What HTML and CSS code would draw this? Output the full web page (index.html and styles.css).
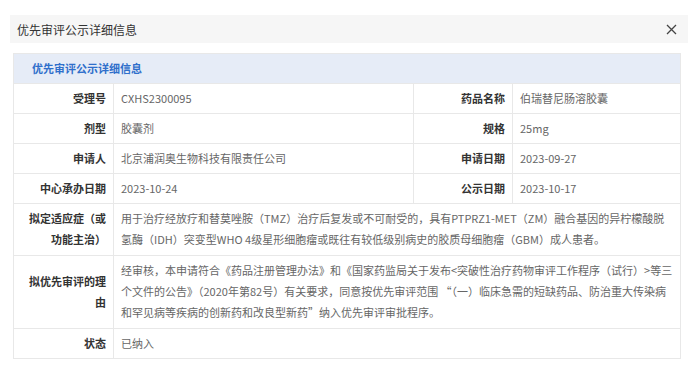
FILE: index.html
```html
<!DOCTYPE html>
<html lang="zh-CN">
<head>
<meta charset="utf-8">
<title>优先审评公示详细信息</title>
<link rel="stylesheet" href="styles.css">
</head>
<body>
<div class="dialog-header">
  <span class="dialog-title">优先审评公示详细信息</span>
  <svg class="close-icon" width="11" height="11" viewBox="0 0 11 11"><path d="M1 1L10 10M10 1L1 10" stroke="#444" stroke-width="1.3" fill="none"/></svg>
</div>
<div class="dialog-body">
  <table class="info-table">
    <colgroup>
      <col class="c-label1">
      <col class="c-value1">
      <col class="c-label2">
      <col class="c-value2">
    </colgroup>
    <tr><th class="table-title" colspan="4">优先审评公示详细信息</th></tr>
    <tr>
      <td class="label">受理号</td><td class="value">CXHS2300095</td>
      <td class="label">药品名称</td><td class="value">伯瑞替尼肠溶胶囊</td>
    </tr>
    <tr>
      <td class="label">剂型</td><td class="value">胶囊剂</td>
      <td class="label">规格</td><td class="value">25mg</td>
    </tr>
    <tr>
      <td class="label">申请人</td><td class="value">北京浦润奥生物科技有限责任公司</td>
      <td class="label">申请日期</td><td class="value">2023-09-27</td>
    </tr>
    <tr>
      <td class="label">中心承办日期</td><td class="value">2023-10-24</td>
      <td class="label">公示日期</td><td class="value">2023-10-17</td>
    </tr>
    <tr class="multi">
      <td class="label">拟定适应症（或功能主治）</td>
      <td class="value" colspan="3">用于治疗经放疗和替莫唑胺（TMZ）治疗后复发或不可耐受的，具有PTPRZ1-MET（ZM）融合基因的异柠檬酸脱氢酶（IDH）突变型WHO 4级星形细胞瘤或既往有较低级别病史的胶质母细胞瘤（GBM）成人患者。</td>
    </tr>
    <tr class="multi">
      <td class="label">拟优先审评的理由</td>
      <td class="value" colspan="3">经审核，本申请符合《药品注册管理办法》和《国家药监局关于发布&lt;突破性治疗药物审评工作程序（试行）&gt;等三个文件的公告》（2020年第82号）有关要求，同意按优先审评范围 “（一）临床急需的短缺药品、防治重大传染病和罕见病等疾病的创新药和改良型新药”纳入优先审评审批程序。</td>
    </tr>
    <tr>
      <td class="label">状态</td><td class="value" colspan="3">已纳入</td>
    </tr>
  </table>
</div>
</body>
</html>
```
FILE: styles.css
```css
html, body {
  margin: 0;
  padding: 0;
  background: #ffffff;
  font-family: "Noto Sans CJK SC", "Microsoft YaHei", sans-serif;
}

.dialog-header {
  margin: 15px 0 0 10px;
  height: 28px;
  background: #f6f6f6;
  display: flex;
  align-items: center;
  justify-content: space-between;
  padding: 0 11px 0 7px;
}

.dialog-title {
  font-size: 12px;
  color: #333;
}

.close-icon {
  display: block;
}

.dialog-body {
  padding: 10px 8px 0 13px;
}

.info-table {
  width: 667px;
  table-layout: fixed;
  border-collapse: collapse;
  font-size: 11px;
  line-height: 21px;
}

.c-label1 { width: 100px; }
.c-value1 { width: 300px; }
.c-label2 { width: 99px; }
.c-value2 { width: 168px; }

.info-table th,
.info-table td {
  border: 1px solid #e8e8e8;
  padding: 4px 7px;
  vertical-align: middle;
}

.table-title {
  background: #e6ecf7;
  color: #2f6fcb;
  font-weight: bold;
  text-align: left;
  padding-left: 18px !important;
  height: 21px;
}

.label {
  text-align: right;
  font-weight: bold;
  color: #333;
}

.value {
  text-align: left;
  color: #666;
}

.multi td {
  padding-top: 4px;
  padding-bottom: 5px;
}
```
